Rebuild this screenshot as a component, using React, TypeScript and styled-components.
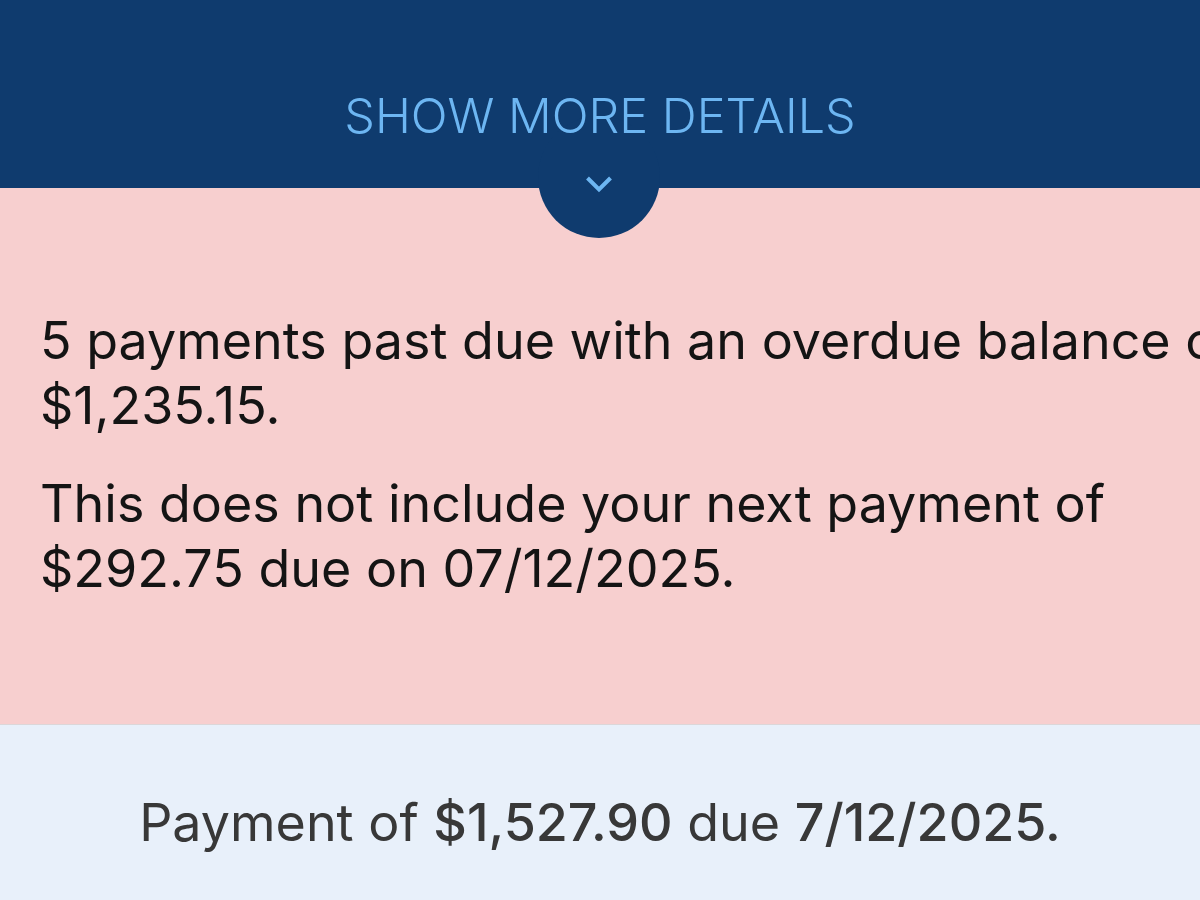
import * as React from 'react';
import styled, { createGlobalStyle } from 'styled-components';

const GlobalStyle = createGlobalStyle`
  html, body {
    margin: 0;
    padding: 0;
    width: 1200px;
    height: 900px;
    overflow: hidden;
    font-family: Inter, "Noto Sans", sans-serif;
    -webkit-font-smoothing: antialiased;
  }
`;

const Screen = styled.div`
  display: flex;
  flex-direction: column;
  width: 1200px;
  height: 900px;
  overflow: hidden;
`;

const DetailsBar = styled.header`
  position: relative;
  height: 188px;
  background: #0f3b6e;
  display: flex;
  justify-content: center;
  padding-top: 88px;
  box-sizing: border-box;
  flex-shrink: 0;
`;

const DetailsToggle = styled.button`
  position: relative;
  z-index: 3;
  background: none;
  border: none;
  padding: 0;
  font-family: Inter, "Noto Sans", sans-serif;
  font-weight: 300;
  font-size: 48.5px;
  line-height: 56px;
  height: 56px;
  color: #6db6f2;
  cursor: pointer;
`;

const ChevronTab = styled.div`
  position: absolute;
  left: 538px;
  top: 116px;
  width: 122px;
  height: 122px;
  border-radius: 50%;
  background: #0f3b6e;
  display: flex;
  justify-content: center;
  padding-top: 59px;
  box-sizing: border-box;
  z-index: 2;
`;

const AlertPanel = styled.section`
  height: 537px;
  background: #f7cfcf;
  border-bottom: 1px solid #dcd6d8;
  padding: 120px 0 0 40px;
  box-sizing: border-box;
  display: flex;
  flex-direction: column;
  gap: 33px;
  flex-shrink: 0;
`;

const AlertText = styled.p<{ $width: number }>`
  margin: 0;
  width: ${p => p.$width}px;
  font-size: 52px;
  line-height: 65px;
  color: #141414;
  font-weight: 400;
`;

const SummaryPanel = styled.section`
  flex: 1;
  background: #e8f0fa;
  display: flex;
  justify-content: center;
  padding-top: 66px;
`;

const SummaryText = styled.p`
  margin: 0;
  font-size: 52px;
  line-height: 64px;
  color: #383838;
  font-weight: 400;

  strong {
    font-weight: 500;
  }
`;

function Chevron() {
  return (
    <svg width="28" height="18" viewBox="0 0 28 18" fill="none">
      <path d="M2.5 3 L14 14.5 L25.5 3" stroke="#6db6f2" strokeWidth="4" strokeLinecap="butt" strokeLinejoin="miter" />
    </svg>
  );
}

export default function App() {
  return (
    <>
      <GlobalStyle />
      <Screen>
        <DetailsBar>
          <DetailsToggle>SHOW MORE DETAILS</DetailsToggle>
          <ChevronTab>
            <Chevron />
          </ChevronTab>
        </DetailsBar>
        <AlertPanel>
          <AlertText $width={1240}>
            5 payments past due with an overdue balance of $1,235.15.
          </AlertText>
          <AlertText $width={1120}>
            This does not include your next payment of $292.75 due on 07/12/2025.
          </AlertText>
        </AlertPanel>
        <SummaryPanel>
          <SummaryText>
            Payment of <strong>$1,527.90</strong> due <strong>7/12/2025.</strong>
          </SummaryText>
        </SummaryPanel>
      </Screen>
    </>
  );
}
